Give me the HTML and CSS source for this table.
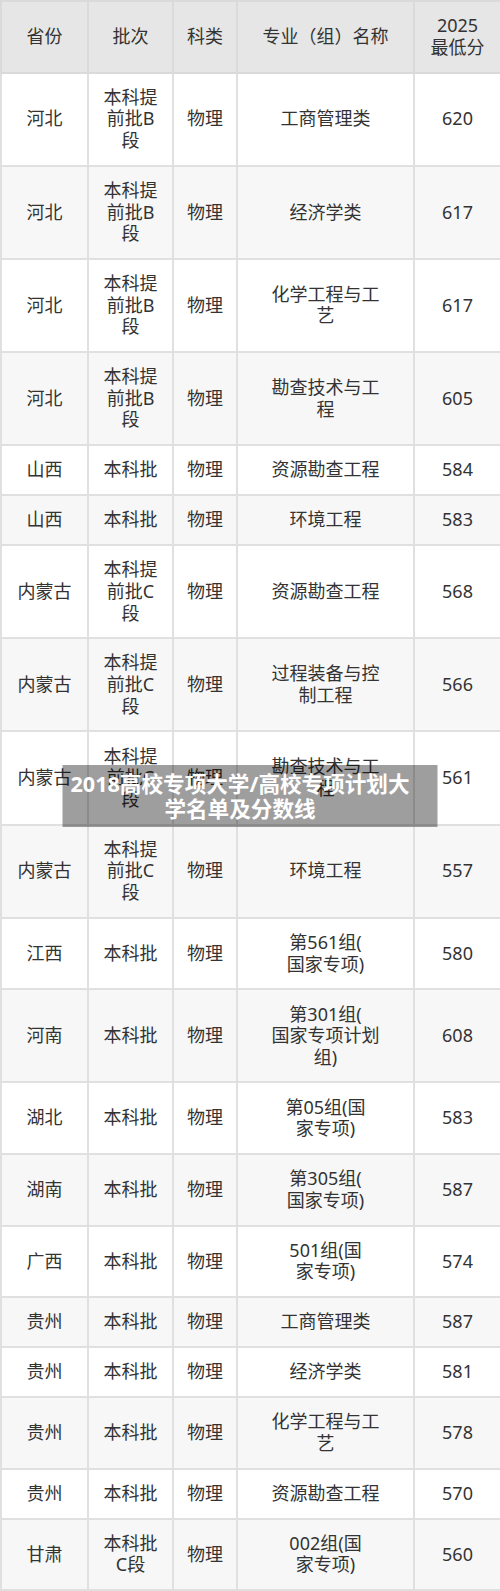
FILE: index.html
```html
<!DOCTYPE html>
<html lang="zh-CN">
<head>
<meta charset="utf-8">
<title>2018高校专项大学/高校专项计划大学名单及分数线</title>
<link rel="stylesheet" href="styles.css">
</head>
<body>
<table class="score-table">
  <colgroup>
    <col class="c-prov"><col class="c-batch"><col class="c-type"><col class="c-major"><col class="c-score">
  </colgroup>
  <thead>
    <tr><th>省份</th><th>批次</th><th>科类</th><th>专业（组）名称</th><th>2025<br>最低分</th></tr>
  </thead>
  <tbody>
    <tr><td>河北</td><td>本科提<br>前批B<br>段</td><td>物理</td><td>工商管理类</td><td>620</td></tr>
    <tr><td>河北</td><td>本科提<br>前批B<br>段</td><td>物理</td><td>经济学类</td><td>617</td></tr>
    <tr><td>河北</td><td>本科提<br>前批B<br>段</td><td>物理</td><td>化学工程与工<br>艺</td><td>617</td></tr>
    <tr><td>河北</td><td>本科提<br>前批B<br>段</td><td>物理</td><td>勘查技术与工<br>程</td><td>605</td></tr>
    <tr><td>山西</td><td>本科批</td><td>物理</td><td>资源勘查工程</td><td>584</td></tr>
    <tr><td>山西</td><td>本科批</td><td>物理</td><td>环境工程</td><td>583</td></tr>
    <tr><td>内蒙古</td><td>本科提<br>前批C<br>段</td><td>物理</td><td>资源勘查工程</td><td>568</td></tr>
    <tr><td>内蒙古</td><td>本科提<br>前批C<br>段</td><td>物理</td><td>过程装备与控<br>制工程</td><td>566</td></tr>
    <tr><td>内蒙古</td><td>本科提<br>前批C<br>段</td><td>物理</td><td>勘查技术与工<br>程</td><td>561</td></tr>
    <tr><td>内蒙古</td><td>本科提<br>前批C<br>段</td><td>物理</td><td>环境工程</td><td>557</td></tr>
    <tr><td>江西</td><td>本科批</td><td>物理</td><td>第561组(<br>国家专项)</td><td>580</td></tr>
    <tr><td>河南</td><td>本科批</td><td>物理</td><td>第301组(<br>国家专项计划<br>组)</td><td>608</td></tr>
    <tr><td>湖北</td><td>本科批</td><td>物理</td><td>第05组(国<br>家专项)</td><td>583</td></tr>
    <tr><td>湖南</td><td>本科批</td><td>物理</td><td>第305组(<br>国家专项)</td><td>587</td></tr>
    <tr><td>广西</td><td>本科批</td><td>物理</td><td>501组(国<br>家专项)</td><td>574</td></tr>
    <tr><td>贵州</td><td>本科批</td><td>物理</td><td>工商管理类</td><td>587</td></tr>
    <tr><td>贵州</td><td>本科批</td><td>物理</td><td>经济学类</td><td>581</td></tr>
    <tr><td>贵州</td><td>本科批</td><td>物理</td><td>化学工程与工<br>艺</td><td>578</td></tr>
    <tr><td>贵州</td><td>本科批</td><td>物理</td><td>资源勘查工程</td><td>570</td></tr>
    <tr><td>甘肃</td><td>本科批<br>C段</td><td>物理</td><td>002组(国<br>家专项)</td><td>560</td></tr>
  </tbody>
</table>
<div class="caption">2018高校专项大学/高校专项计划大学名单及分数线</div>
</body>
</html>
```
FILE: styles.css
```css
html, body {
  margin: 0;
  padding: 0;
  background: #ffffff;
}
body {
  position: relative;
  width: 500px;
  font-family: "Noto Sans", "Noto Sans CJK SC", sans-serif;
  color: #333333;
}
.score-table {
  width: 500px;
  table-layout: fixed;
  border-collapse: collapse;
  font-size: 18px;
  line-height: 21.6px;
}
.c-prov { width: 87px; }
.c-batch { width: 85px; }
.c-type { width: 64px; }
.c-major { width: 177px; }
.c-score { width: 87px; }
.score-table th,
.score-table td {
  border: 2px solid #e0e0e0;
  padding: 13.2px 6px;
  text-align: center;
  vertical-align: middle;
  font-weight: normal;
}
.score-table th {
  background: #e6e6e6;
  border-color: #dadada;
}
.score-table tbody tr:nth-child(even) td {
  background: #f7f7f7;
}
.caption {
  position: absolute;
  top: 50%;
  left: 50%;
  width: 75%;
  box-sizing: border-box;
  transform: translate(-50%, -50%);
  padding: 6px 25px 6px 5px;
  background: rgba(0, 0, 0, 0.38);
  color: #ffffff;
  font-family: "Noto Sans", "Noto Sans CJK SC", sans-serif;
  font-weight: bold;
  font-size: 21.6px;
  line-height: 25px;
  text-align: center;
}
```
